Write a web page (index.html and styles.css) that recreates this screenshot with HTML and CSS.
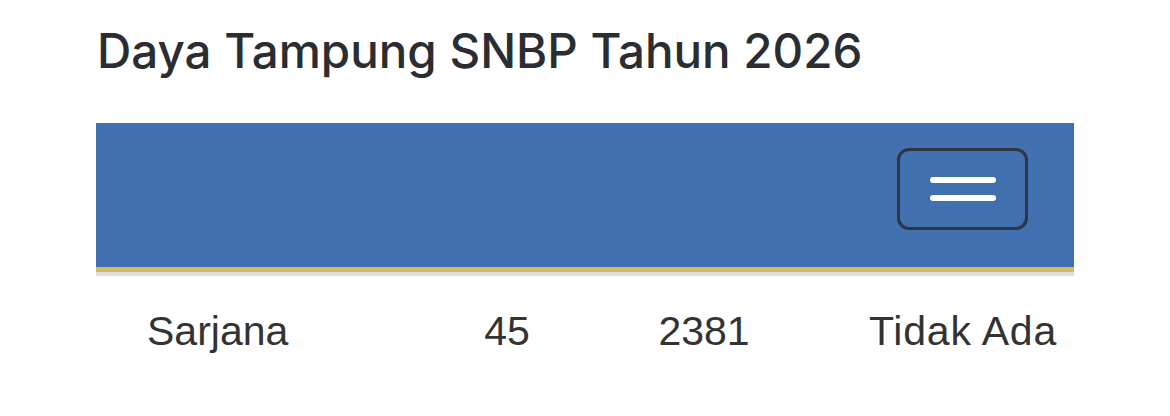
FILE: index.html
```html
<!DOCTYPE html>
<html lang="id">
<head>
    <meta charset="UTF-8">
    <meta name="viewport" content="width=device-width, initial-scale=1.0">
    <title>Daya Tampung SNBP</title>
    <link rel="stylesheet" href="styles.css">
</head>
<body>
    <div class="page">
        <h2 class="title">Daya Tampung SNBP Tahun 2026</h2>

        <div class="nav-wrap">
            <nav class="navbar">
                <button class="nav-toggle" type="button" aria-label="Menu">
                    <span class="bar"></span>
                    <span class="bar"></span>
                </button>
            </nav>
        </div>

        <div class="row">
            <div class="cell cell-name">Sarjana</div>
            <div class="cell cell-center">45</div>
            <div class="cell cell-center">2381</div>
            <div class="cell cell-right">Tidak Ada</div>
        </div>
    </div>
</body>
</html>
```

FILE: styles.css
```css
body { margin: 0; padding: 0; background: #fff; }
.page { padding: 0 96px; }
.title { font-family: Inter, "Noto Sans", sans-serif; font-weight: 500; font-size: 47.5px; line-height: 1.2; color: #2a2d31; margin: 22px 0 44px 1px; }
.nav-wrap { border-bottom: 4px solid #e2dedb; }
.navbar { height: 149px; box-sizing: border-box; background: #4070b0; border-bottom: 5px solid #d3bc63; display: flex; justify-content: flex-end; align-items: flex-start; padding: 25px 46px 0 0; }
.nav-toggle { width: 131px; height: 82px; box-sizing: border-box; background: transparent; border: 3px solid #2f3544; border-radius: 12px; display: flex; flex-direction: column; align-items: center; justify-content: center; gap: 12px; padding: 0; cursor: pointer; }
.bar { display: block; width: 66px; height: 6px; border-radius: 3px; background: #fff; }
.row { display: grid; grid-template-columns: 314px 194px 200px 1fr; font-family: "Liberation Sans", Arial, sans-serif; font-size: 41px; line-height: 46px; color: #333; padding-top: 32px; }
.cell-name { padding-left: 51px; }
.cell-center { text-align: center; }
.cell-right { text-align: right; padding-right: 17px; letter-spacing: 0.8px; }
```
